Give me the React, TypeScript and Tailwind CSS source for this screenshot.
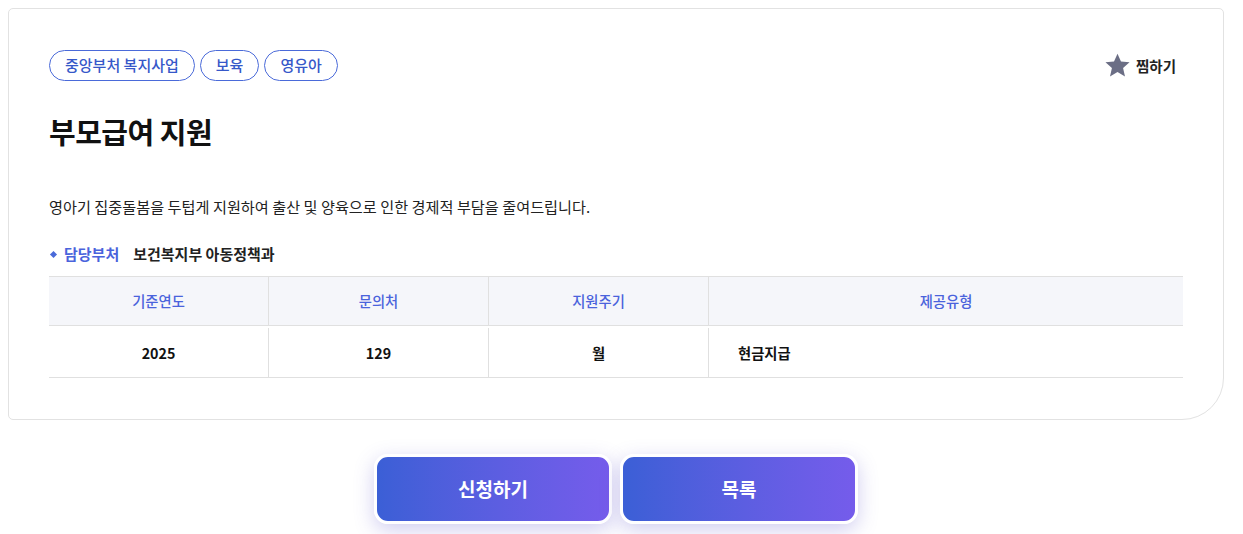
export default function App() {
  const heads = ["기준연도", "문의처", "지원주기", "제공유형"];
  return (
    <div
      className="min-h-[534px] bg-white pt-2 text-[#111]"
      style={{ fontFamily: '"Noto Sans CJK KR", "Noto Sans", sans-serif' }}
    >
      <div className="ml-2 w-[1216px] rounded-[5px] rounded-br-[42px] border border-[#e2e2e2] bg-white px-10 pt-[41px] pb-[41px]">
        <div className="flex items-center justify-between">
          <div className="flex gap-[5px]">
            {["중앙부처 복지사업", "보육", "영유아"].map((t) => (
              <span
                key={t}
                className="flex h-[31px] items-center rounded-full border border-[#4a6ad9] px-[15px] text-[15px] font-medium text-[#3658c9]"
              >
                {t}
              </span>
            ))}
          </div>
          <button className="mr-[7px] flex items-center gap-[5px] text-[14.5px] font-bold text-[#222]">
            <svg width="27" height="27" viewBox="0 0 24 24" fill="#6b6e85">
              <path d="M12 1.5l3.1 7.05 7.6.65-5.75 5 1.72 7.5L12 17.8l-6.67 3.9 1.72-7.5-5.75-5 7.6-.65z" />
            </svg>
            찜하기
          </button>
        </div>
        <h1 className="mt-[30px] text-[29px] leading-[40px] font-bold tracking-[-0.5px]">부모급여 지원</h1>
        <p className="mt-[43px] text-[15.2px] leading-[24px] text-[#222]">
          영아기 집중돌봄을 두텁게 지원하여 출산 및 양육으로 인한 경제적 부담을 줄여드립니다.
        </p>
        <div className="mt-[25px] flex items-center text-[15px] leading-[22px] font-bold">
          <span className="ml-[2px] mr-[8px] h-[5px] w-[5px] rotate-45 bg-[#4a6ad9]" />
          <span className="text-[#4a63dc]">담당부처</span>
          <span className="ml-[14px] text-[#222]">보건복지부 아동정책과</span>
        </div>
        <div className="mt-[11px] grid grid-cols-[220px_220px_220px_1fr] border-t border-[#e0e0e0] text-[14.3px]">
          {heads.map((h, i) => (
            <div
              key={h}
              className={`flex h-[49px] items-center justify-center border-b border-[#e0e0e0] bg-[#f5f6fa] font-medium text-[#4a63dc] ${i < 3 ? "border-r" : ""}`}
            >
              {h}
            </div>
          ))}
          <div className="mt-[2px] flex h-[50px] items-center justify-center border-r border-b border-[#e0e0e0] font-bold">2025</div>
          <div className="mt-[2px] flex h-[50px] items-center justify-center border-r border-b border-[#e0e0e0] font-bold">129</div>
          <div className="mt-[2px] flex h-[50px] items-center justify-center border-r border-b border-[#e0e0e0] font-bold">월</div>
          <div className="mt-[2px] flex h-[50px] items-center border-b border-[#e0e0e0] pl-[29px] font-bold">현금지급</div>
        </div>
      </div>
      <div className="ml-2 mt-[34px] flex w-[1216px] justify-center gap-2">
        {["신청하기", "목록"].map((t) => (
          <button
            key={t}
            className="flex h-[70px] w-[238px] items-center justify-center rounded-[14px] border-[3px] border-white bg-gradient-to-r from-[#3b5fd6] to-[#755ceb] text-[19px] font-bold text-white shadow-[0_6px_20px_rgba(90,80,200,0.28)]"
          >
            {t}
          </button>
        ))}
      </div>
    </div>
  );
}
